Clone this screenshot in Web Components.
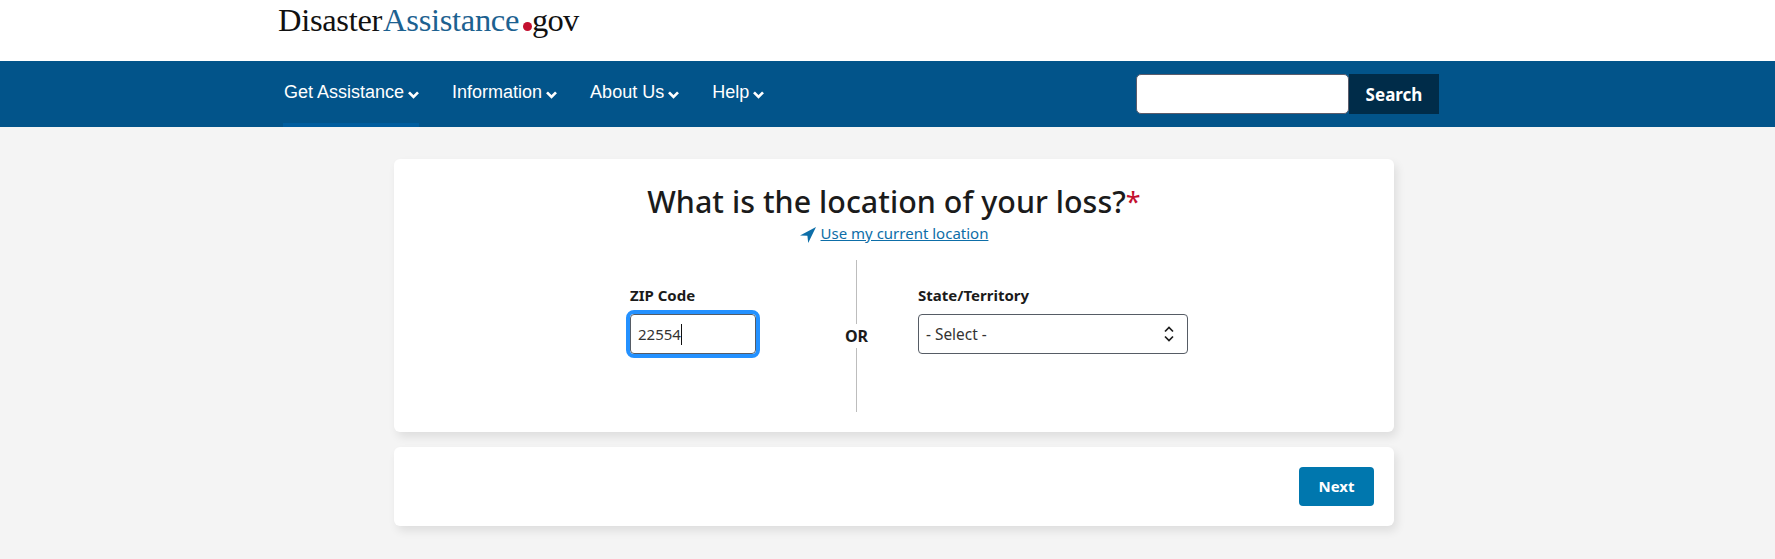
<!DOCTYPE html>
<html lang="en">
<head>
<meta charset="utf-8">
<title>DisasterAssistance.gov</title>
<style>
  html, body { margin: 0; padding: 0; background: #f4f4f4; }
  body { font-family: "Noto Sans", sans-serif; color: #1b1b1b; height: 559px; overflow: hidden; }
</style>
</head>
<body>
<da-header>
  <da-nav-item active>Get Assistance</da-nav-item>
  <da-nav-item>Information</da-nav-item>
  <da-nav-item>About Us</da-nav-item>
  <da-nav-item>Help</da-nav-item>
</da-header>
<da-main>
  <da-card>
    <da-location-form></da-location-form>
  </da-card>
  <da-card footer>
    <da-button>Next</da-button>
  </da-card>
</da-main>

<script>
class DaHeader extends HTMLElement {
  constructor() {
    super();
    this.attachShadow({ mode: 'open' });
    this.shadowRoot.innerHTML = `
      <style>
        :host { display: block; }
        .top { height: 61px; background: #fff; box-sizing: border-box; padding: 0 0 0 278px; }
        .logo {
          display: flex; align-items: baseline;
          font: 32.5px/41px "Liberation Serif", serif; letter-spacing: -.3px; color: #111;
        }
        .logo b { font-weight: normal; color: #1c6190; margin-left: 1px; }
        .dot { width: 9px; height: 9px; border-radius: 50%; background: #c3102f; margin: 0 0 0 4px; }
        .logo em { font-style: normal; letter-spacing: -.8px; }
        .bar { height: 66px; background: #02548a; display: flex; align-items: stretch; padding-left: 284px; }
        nav { display: flex; gap: 33px; }
        form { display: flex; margin: 13px 336px 0 auto; height: 40px; }
        .box { width: 213px; height: 40px; box-sizing: border-box; background: #fff; border: 1px solid #5c5c6b; border-radius: 5px; }
        button {
          width: 90px; height: 40px; border: 0; background: #002c49; color: #fff;
          font: 700 17px "Noto Sans", sans-serif; padding: 0;
        }
      </style>
      <div class="top">
        <div class="logo">Disaster<b>Assistance</b><span class="dot"></span><em>gov</em></div>
      </div>
      <div class="bar">
        <nav><slot></slot></nav>
        <form><div class="box"></div><button type="button">Search</button></form>
      </div>`;
  }
}

class DaNavItem extends HTMLElement {
  constructor() {
    super();
    this.attachShadow({ mode: 'open' });
    this.shadowRoot.innerHTML = `
      <style>
        :host {
          display: flex; align-items: center; gap: 4px; box-sizing: border-box; height: 66px;
          font: 18px "Liberation Sans", sans-serif; color: #fff; border-bottom: 4px solid transparent;
        }
        :host([active]) { border-bottom-color: #005d9e; margin-left: -1px; padding-left: 1px; }
        svg { width: 11px; height: 8px; margin-top: 5px; }
      </style>
      <slot></slot>
      <svg viewBox="0 0 11 8"><path d="M1 1.4 5.5 5.9 10 1.4" fill="none" stroke="#fff" stroke-width="2.7"/></svg>`;
  }
}

class DaMain extends HTMLElement {
  constructor() {
    super();
    this.attachShadow({ mode: 'open' });
    this.shadowRoot.innerHTML = `
      <style>
        :host { display: flex; flex-direction: column; gap: 15px; width: 1000px; margin-left: 394px; padding-top: 32px; }
      </style>
      <slot></slot>`;
  }
}

class DaCard extends HTMLElement {
  constructor() {
    super();
    this.attachShadow({ mode: 'open' });
    this.shadowRoot.innerHTML = `
      <style>
        :host {
          display: block; box-sizing: border-box; background: #fff; border-radius: 6px;
          box-shadow: 3px 5px 10px rgba(0,0,0,.09);
        }
        :host([footer]) { display: flex; justify-content: flex-end; align-items: flex-start; height: 79px; padding: 20px 20px 0 0; }
      </style>
      <slot></slot>`;
  }
}

class DaButton extends HTMLElement {
  constructor() {
    super();
    this.attachShadow({ mode: 'open' });
    this.shadowRoot.innerHTML = `
      <style>
        :host {
          display: flex; align-items: center; justify-content: center; box-sizing: border-box;
          width: 75px; height: 39px; padding-bottom: 2px;
          background: #0077ae; color: #fff; border-radius: 4px; font: 700 15px "Noto Sans", sans-serif;
        }
      </style>
      <slot></slot>`;
  }
}

class DaField extends HTMLElement {
  constructor() {
    super();
    this.attachShadow({ mode: 'open' });
    this.shadowRoot.innerHTML = `
      <style>
        :host { display: flex; flex-direction: column; gap: 8px; }
        label { font: 700 15px/22px "Noto Sans", sans-serif; color: #1b1b1b; display: block; }
      </style>
      <label>${this.getAttribute('label')}</label>
      <slot></slot>`;
  }
}

class DaLocationForm extends HTMLElement {
  constructor() {
    super();
    this.attachShadow({ mode: 'open' });
    this.shadowRoot.innerHTML = `
      <style>
        :host { display: block; height: 273px; padding-top: 24px; box-sizing: border-box; text-align: center; }
        h1 { margin: 0; font: 500 30.4px/38px "Noto Sans", sans-serif; letter-spacing: .03px; color: #1b1b1b; }
        h1 span { color: #c3102f; font-weight: 400; font-size: 27px; line-height: 1; vertical-align: 1px; }
        .use { display: flex; justify-content: center; align-items: center; gap: 5px; height: 18px; margin-top: 3px; font-size: 15px; }
        .use a { color: #0d6ea8; text-decoration: underline; }
        .use svg { width: 16px; height: 16px; margin-top: 3px; }
        .row { display: flex; margin-top: 18px; padding-left: 236px; text-align: left; }
        .zip { width: 126px; padding-top: 24px; }
        .or { width: 1px; margin: 0 61px 0 100px; display: flex; flex-direction: column; align-items: center; height: 152px; }
        .or i { width: 1px; flex: 1; background: #bdbdbd; }
        .or b { font: 700 16px/24px "Noto Sans", sans-serif; color: #1b1b1b; white-space: nowrap; }
        .state { width: 270px; padding-top: 24px; }
        .input {
          box-sizing: border-box; height: 40px; border: 1px solid #565c65; border-radius: 4px;
          display: flex; align-items: center; padding-left: 7px; font-size: 15px; color: #333;
        }
        .focus { outline: 4px solid #2491ff; outline-offset: 0; }
        .caret { width: 1px; height: 21px; background: #111; }
        .select { justify-content: space-between; padding-right: 12px; font-size: 15.4px; }
        .select svg { width: 12px; height: 20px; }
      </style>
      <h1>What is the location of your loss?<span>*</span></h1>
      <div class="use">
        <svg viewBox="0 0 16 16"><path d="M16 0 0 8.6 7.4 8.7 8.2 16Z" fill="#0d6ea8"/></svg>
        <a href="#">Use my current location</a>
      </div>
      <div class="row">
        <da-field class="zip" label="ZIP Code">
          <div class="input focus">22554<span class="caret"></span></div>
        </da-field>
        <div class="or"><i></i><b>OR</b><i></i></div>
        <da-field class="state" label="State/Territory">
          <div class="input select">- Select -
            <svg viewBox="0 0 12 20"><path d="M2 7.5 6 3.5 10 7.5M2 12.5 6 16.5 10 12.5" fill="none" stroke="#1b1b1b" stroke-width="1.7"/></svg>
          </div>
        </da-field>
      </div>`;
  }
}

customElements.define('da-nav-item', DaNavItem);
customElements.define('da-header', DaHeader);
customElements.define('da-main', DaMain);
customElements.define('da-card', DaCard);
customElements.define('da-button', DaButton);
customElements.define('da-field', DaField);
customElements.define('da-location-form', DaLocationForm);
</script>
</body>
</html>
